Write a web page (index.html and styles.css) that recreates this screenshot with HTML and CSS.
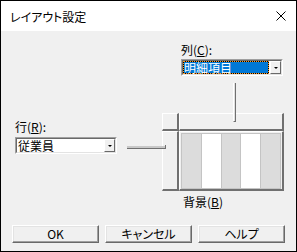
FILE: index.html
```html
<!DOCTYPE html>
<html lang="ja">

<head>
    <meta charset="UTF-8">
    <meta name="viewport" content="width=device-width, initial-scale=1.0">
    <title>レイアウト設定</title>
    <link rel="stylesheet" href="styles.css">
</head>

<body>
    <div class="ventana">
        <div class="titulo-barra">
            <span class="titulo">レイアウト設定</span>
            <svg class="cerrar" width="10" height="10" viewBox="0 0 10 10">
                <path d="M0.5 0.5 L9.5 9.5 M9.5 0.5 L0.5 9.5" stroke="#000" stroke-width="1" fill="none"/>
            </svg>
        </div>

        <div class="cuerpo">
            <div class="principal">
                <div class="campo-fila">
                    <div class="etiqueta">行(<u>R</u>):</div>
                    <div class="combo">
                        <div class="combo-interior">
                            <div class="valor">従業員</div>
                            <div class="flecha-boton"><span class="flecha"></span></div>
                        </div>
                    </div>
                </div>

                <div class="lado-columna">
                    <div class="campo-columna">
                        <div class="etiqueta">列(<u>C</u>):</div>
                        <div class="combo">
                            <div class="combo-interior">
                                <div class="valor seleccionado">明細項目</div>
                                <div class="flecha-boton"><span class="flecha"></span></div>
                            </div>
                        </div>
                    </div>

                    <div class="diagrama">
                        <div class="celda"></div>
                        <div class="celda"></div>
                        <div class="celda"></div>
                        <div class="celda celda-datos">
                            <div class="franjas">
                                <span class="gris"></span>
                                <span></span>
                                <span class="gris"></span>
                                <span></span>
                                <span class="gris"></span>
                            </div>
                        </div>
                        <span class="enlace-v"></span>
                        <span class="enlace-h"></span>
                    </div>

                    <div class="etiqueta etiqueta-fondo">背景(<u>B</u>)</div>
                </div>
            </div>

            <div class="botones">
                <button>OK</button>
                <button>キャンセル</button>
                <button>ヘルプ</button>
            </div>
        </div>
    </div>
</body>

</html>
```

FILE: styles.css
```css
* {
    margin: 0;
    padding: 0;
    box-sizing: border-box;
}

body {
    background: #fff;
    font-family: "Noto Sans CJK JP", "Noto Sans", sans-serif;
    font-size: 12px;
    color: #000;
}

.ventana {
    width: 297px;
    height: 252px;
    border: 1px solid #000;
    display: flex;
    flex-direction: column;
}

.titulo-barra {
    height: 30px;
    background: #fff;
    display: flex;
    align-items: center;
    justify-content: space-between;
    padding: 0 10px 0 9px;
}

.titulo {
    font-size: 12px;
    font-feature-settings: "palt";
}

.cuerpo {
    flex: 1;
    background: #f0f0f0;
    display: flex;
    flex-direction: column;
}

.principal {
    display: flex;
    align-items: flex-start;
}

.etiqueta {
    line-height: 14px;
    font-feature-settings: "palt";
}

.campo-fila {
    width: 102px;
    margin: 89px 0 0 14px;
}

.campo-fila .etiqueta {
    margin-bottom: 3px;
}

.lado-columna {
    width: 122px;
    margin: 12px 0 0 45px;
}

.campo-columna {
    margin-left: 19px;
    width: 102px;
}

.campo-columna .etiqueta {
    margin-bottom: 2px;
}

/* combo hundido estilo clasico */
.combo {
    height: 17px;
    border: 1px solid;
    border-color: #a0a0a0 #fff #fff #a0a0a0;
}

.combo-interior {
    height: 100%;
    border: 1px solid;
    border-color: #696969 #e3e3e3 #e3e3e3 #696969;
    background: #fff;
    display: flex;
}

.valor {
    flex: 1;
    line-height: 13px;
    padding-left: 1px;
    white-space: nowrap;
}

.seleccionado {
    background: #0078d7;
    color: #fff;
    box-shadow: inset 0 0 0 1px #000;
    outline: 1px dotted #ff9a20;
    outline-offset: -1px;
    margin-right: 1px;
}

.flecha-boton {
    width: 11px;
    background: #f0f0f0;
    border: 1px solid;
    border-color: #fff #696969 #696969 #fff;
    display: flex;
    align-items: center;
    justify-content: center;
}

.flecha {
    width: 0;
    height: 0;
    border-left: 2px solid transparent;
    border-right: 2px solid transparent;
    border-top: 2px solid #000;
}

/* diagrama */
.diagrama {
    position: relative;
    margin-top: 37px;
    display: grid;
    grid-template-columns: 17px 105px;
    grid-template-rows: 18px 60px;
}

.celda {
    background: #f0f0f0;
    border-style: solid;
    border-width: 1px 2px 2px 1px;
    border-color: #fff #707070 #707070 #fff;
}

.celda-datos {
    padding: 1px 1px 0 1px;
}

.franjas {
    height: 100%;
    display: grid;
    grid-template-columns: repeat(5, 1fr);
    gap: 1px;
    background: #c4c4c4;
    border: 1px solid #c4c4c4;
}

.franjas span {
    background: #fff;
}

.franjas .gris {
    background: #dcdcdc;
}

.enlace-v {
    position: absolute;
    left: 71px;
    top: -30px;
    width: 3px;
    height: 39px;
    background: #e0e0e0;
    border-left: 1px solid #fff;
    border-right: 1px solid #707070;
    border-bottom: 1px solid #707070;
}

.enlace-h {
    position: absolute;
    left: -35px;
    top: 32px;
    width: 39px;
    height: 4px;
    border-bottom: 1px solid #707070;
    border-right: 1px solid #707070;
    box-shadow: inset 0 -2px 0 #c8c8c8;
}

.etiqueta-fondo {
    margin: 4px 0 0 21px;
}

/* botones */
.botones {
    margin-top: auto;
    display: flex;
    gap: 6px;
    padding: 0 0 8px 11px;
}

button {
    width: 87px;
    height: 18px;
    font-family: "Noto Sans CJK JP", "Noto Sans", sans-serif;
    font-size: 12px;
    font-feature-settings: "palt";
    line-height: 14px;
    background: #f0f0f0;
    color: #000;
    border: 1px solid;
    border-color: #fff #696969 #696969 #fff;
    box-shadow: inset -1px -1px 0 #a0a0a0, inset 1px 1px 0 #e3e3e3;
}
```
